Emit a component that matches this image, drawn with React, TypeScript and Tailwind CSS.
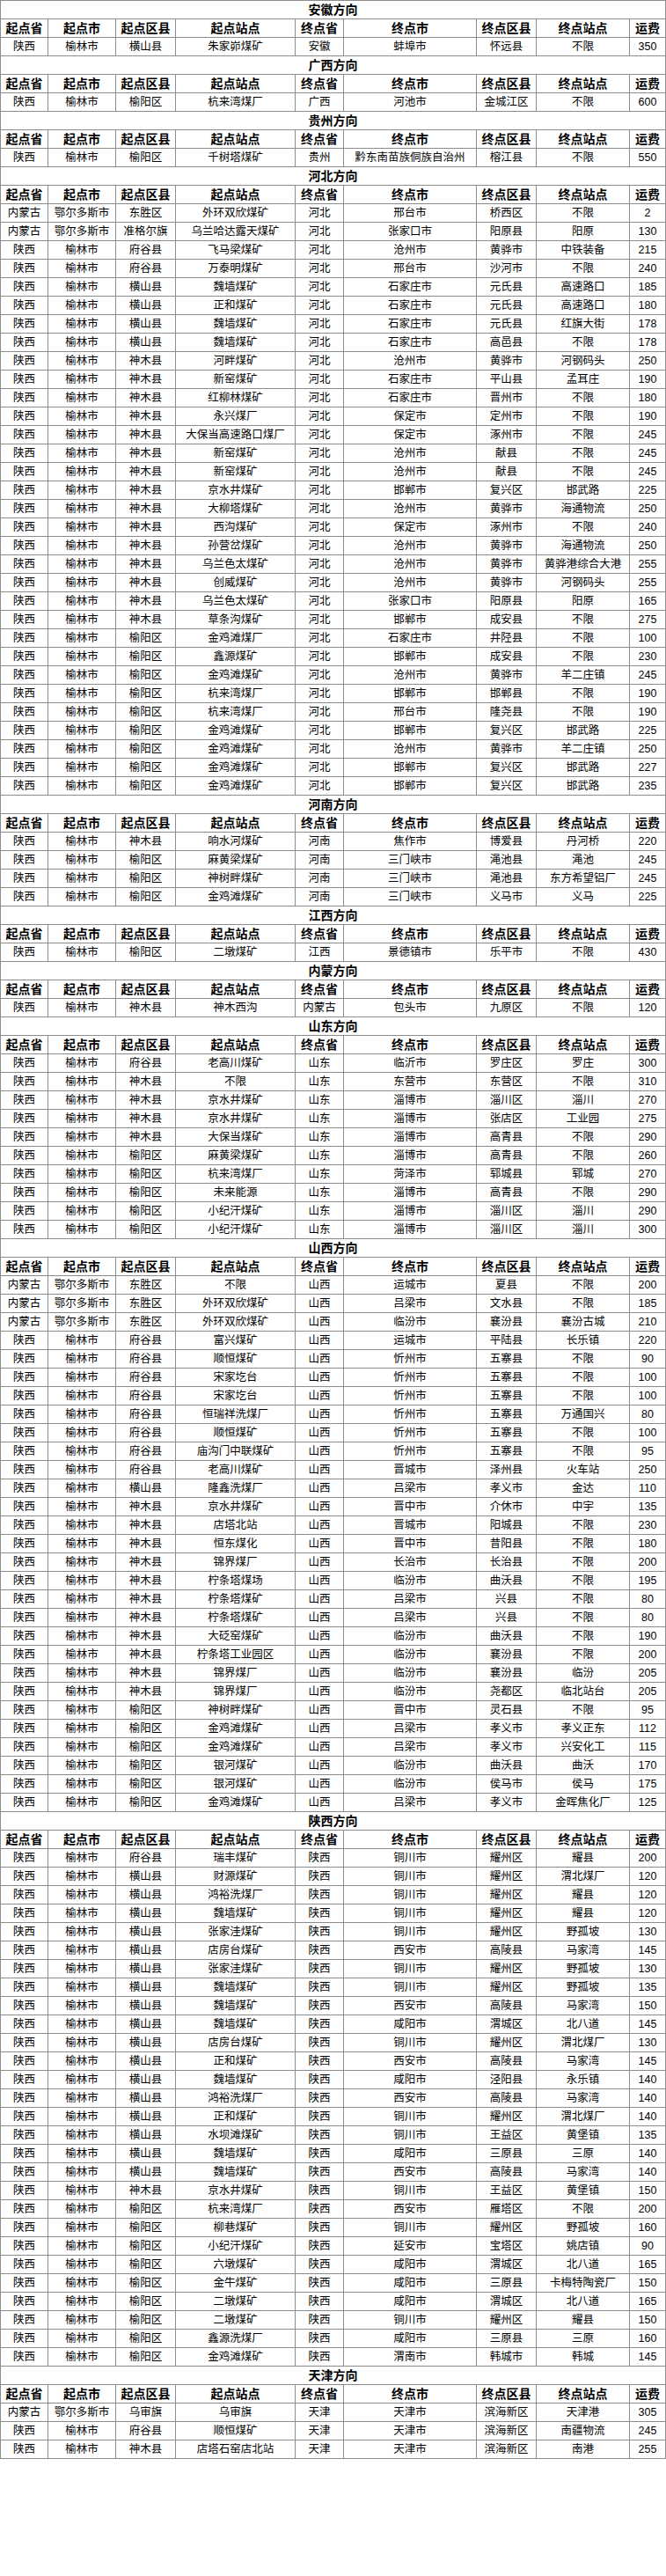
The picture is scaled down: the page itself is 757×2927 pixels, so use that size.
const HEAD = ["起点省", "起点市", "起点区县", "起点站点", "终点省", "终点市", "终点区县", "终点站点", "运费"];

type Row = string[];
type Section = { title: string; rows: Row[] };

// 简写: 起点 "陕西 榆林市 xx县" 最常见
const sx = (qx: string, zd: string, sf: string, s: string, q: string, dz: string, fee: string): Row => [
    "陕西", "榆林市", qx, zd, sf, s, q, dz, fee,
];
const nm = (qx: string, zd: string, sf: string, s: string, q: string, dz: string, fee: string): Row => [
    "内蒙古", "鄂尔多斯市", qx, zd, sf, s, q, dz, fee,
];

const sections: Section[] = [
    { title: "安徽方向", rows: [sx("横山县", "朱家峁煤矿", "安徽", "蚌埠市", "怀远县", "不限", "350")] },
    { title: "广西方向", rows: [sx("榆阳区", "杭来湾煤厂", "广西", "河池市", "金城江区", "不限", "600")] },
    { title: "贵州方向", rows: [sx("榆阳区", "千树塔煤矿", "贵州", "黔东南苗族侗族自治州", "榕江县", "不限", "550")] },
    {
        title: "河北方向",
        rows: [
            nm("东胜区", "外环双欣煤矿", "河北", "邢台市", "桥西区", "不限", "2"),
            nm("准格尔旗", "乌兰哈达露天煤矿", "河北", "张家口市", "阳原县", "阳原", "130"),
            sx("府谷县", "飞马梁煤矿", "河北", "沧州市", "黄骅市", "中铁装备", "215"),
            sx("府谷县", "万泰明煤矿", "河北", "邢台市", "沙河市", "不限", "240"),
            sx("横山县", "魏墙煤矿", "河北", "石家庄市", "元氏县", "高速路口", "185"),
            sx("横山县", "正和煤矿", "河北", "石家庄市", "元氏县", "高速路口", "180"),
            sx("横山县", "魏墙煤矿", "河北", "石家庄市", "元氏县", "红旗大街", "178"),
            sx("横山县", "魏墙煤矿", "河北", "石家庄市", "高邑县", "不限", "178"),
            sx("神木县", "河畔煤矿", "河北", "沧州市", "黄骅市", "河钢码头", "250"),
            sx("神木县", "新窑煤矿", "河北", "石家庄市", "平山县", "孟耳庄", "190"),
            sx("神木县", "红柳林煤矿", "河北", "石家庄市", "晋州市", "不限", "180"),
            sx("神木县", "永兴煤厂", "河北", "保定市", "定州市", "不限", "190"),
            sx("神木县", "大保当高速路口煤厂", "河北", "保定市", "涿州市", "不限", "245"),
            sx("神木县", "新窑煤矿", "河北", "沧州市", "献县", "不限", "245"),
            sx("神木县", "新窑煤矿", "河北", "沧州市", "献县", "不限", "245"),
            sx("神木县", "京水井煤矿", "河北", "邯郸市", "复兴区", "邯武路", "225"),
            sx("神木县", "大柳塔煤矿", "河北", "沧州市", "黄骅市", "海通物流", "250"),
            sx("神木县", "西沟煤矿", "河北", "保定市", "涿州市", "不限", "240"),
            sx("神木县", "孙营岔煤矿", "河北", "沧州市", "黄骅市", "海通物流", "250"),
            sx("神木县", "乌兰色太煤矿", "河北", "沧州市", "黄骅市", "黄骅港综合大港", "255"),
            sx("神木县", "创威煤矿", "河北", "沧州市", "黄骅市", "河钢码头", "255"),
            sx("神木县", "乌兰色太煤矿", "河北", "张家口市", "阳原县", "阳原", "165"),
            sx("神木县", "草条沟煤矿", "河北", "邯郸市", "成安县", "不限", "275"),
            sx("榆阳区", "金鸡滩煤厂", "河北", "石家庄市", "井陉县", "不限", "100"),
            sx("榆阳区", "鑫源煤矿", "河北", "邯郸市", "成安县", "不限", "230"),
            sx("榆阳区", "金鸡滩煤矿", "河北", "沧州市", "黄骅市", "羊二庄镇", "245"),
            sx("榆阳区", "杭来湾煤厂", "河北", "邯郸市", "邯郸县", "不限", "190"),
            sx("榆阳区", "杭来湾煤厂", "河北", "邢台市", "隆尧县", "不限", "190"),
            sx("榆阳区", "金鸡滩煤矿", "河北", "邯郸市", "复兴区", "邯武路", "225"),
            sx("榆阳区", "金鸡滩煤矿", "河北", "沧州市", "黄骅市", "羊二庄镇", "250"),
            sx("榆阳区", "金鸡滩煤矿", "河北", "邯郸市", "复兴区", "邯武路", "227"),
            sx("榆阳区", "金鸡滩煤矿", "河北", "邯郸市", "复兴区", "邯武路", "235"),
        ],
    },
    {
        title: "河南方向",
        rows: [
            sx("神木县", "响水河煤矿", "河南", "焦作市", "博爱县", "丹河桥", "220"),
            sx("榆阳区", "麻黄梁煤矿", "河南", "三门峡市", "渑池县", "渑池", "245"),
            sx("榆阳区", "神树畔煤矿", "河南", "三门峡市", "渑池县", "东方希望铝厂", "245"),
            sx("榆阳区", "金鸡滩煤矿", "河南", "三门峡市", "义马市", "义马", "225"),
        ],
    },
    { title: "江西方向", rows: [sx("榆阳区", "二墩煤矿", "江西", "景德镇市", "乐平市", "不限", "430")] },
    { title: "内蒙方向", rows: [sx("神木县", "神木西沟", "内蒙古", "包头市", "九原区", "不限", "120")] },
    {
        title: "山东方向",
        rows: [
            sx("府谷县", "老高川煤矿", "山东", "临沂市", "罗庄区", "罗庄", "300"),
            sx("神木县", "不限", "山东", "东营市", "东营区", "不限", "310"),
            sx("神木县", "京水井煤矿", "山东", "淄博市", "淄川区", "淄川", "270"),
            sx("神木县", "京水井煤矿", "山东", "淄博市", "张店区", "工业园", "275"),
            sx("神木县", "大保当煤矿", "山东", "淄博市", "高青县", "不限", "290"),
            sx("榆阳区", "麻黄梁煤矿", "山东", "淄博市", "高青县", "不限", "260"),
            sx("榆阳区", "杭来湾煤厂", "山东", "菏泽市", "郓城县", "郓城", "270"),
            sx("榆阳区", "未来能源", "山东", "淄博市", "高青县", "不限", "290"),
            sx("榆阳区", "小纪汗煤矿", "山东", "淄博市", "淄川区", "淄川", "290"),
            sx("榆阳区", "小纪汗煤矿", "山东", "淄博市", "淄川区", "淄川", "300"),
        ],
    },
    {
        title: "山西方向",
        rows: [
            nm("东胜区", "不限", "山西", "运城市", "夏县", "不限", "200"),
            nm("东胜区", "外环双欣煤矿", "山西", "吕梁市", "文水县", "不限", "185"),
            nm("东胜区", "外环双欣煤矿", "山西", "临汾市", "襄汾县", "襄汾古城", "210"),
            sx("府谷县", "富兴煤矿", "山西", "运城市", "平陆县", "长乐镇", "220"),
            sx("府谷县", "顺恒煤矿", "山西", "忻州市", "五寨县", "不限", "90"),
            sx("府谷县", "宋家圪台", "山西", "忻州市", "五寨县", "不限", "100"),
            sx("府谷县", "宋家圪台", "山西", "忻州市", "五寨县", "不限", "100"),
            sx("府谷县", "恒瑞祥洗煤厂", "山西", "忻州市", "五寨县", "万通国兴", "80"),
            sx("府谷县", "顺恒煤矿", "山西", "忻州市", "五寨县", "不限", "100"),
            sx("府谷县", "庙沟门中联煤矿", "山西", "忻州市", "五寨县", "不限", "95"),
            sx("府谷县", "老高川煤矿", "山西", "晋城市", "泽州县", "火车站", "250"),
            sx("横山县", "隆鑫洗煤厂", "山西", "吕梁市", "孝义市", "金达", "110"),
            sx("神木县", "京水井煤矿", "山西", "晋中市", "介休市", "中宇", "135"),
            sx("神木县", "店塔北站", "山西", "晋城市", "阳城县", "不限", "230"),
            sx("神木县", "恒东煤化", "山西", "晋中市", "昔阳县", "不限", "180"),
            sx("神木县", "锦界煤厂", "山西", "长治市", "长治县", "不限", "200"),
            sx("神木县", "柠条塔煤场", "山西", "临汾市", "曲沃县", "不限", "195"),
            sx("神木县", "柠条塔煤矿", "山西", "吕梁市", "兴县", "不限", "80"),
            sx("神木县", "柠条塔煤矿", "山西", "吕梁市", "兴县", "不限", "80"),
            sx("神木县", "大砭窑煤矿", "山西", "临汾市", "曲沃县", "不限", "190"),
            sx("神木县", "柠条塔工业园区", "山西", "临汾市", "襄汾县", "不限", "200"),
            sx("神木县", "锦界煤厂", "山西", "临汾市", "襄汾县", "临汾", "205"),
            sx("神木县", "锦界煤厂", "山西", "临汾市", "尧都区", "临北站台", "205"),
            sx("榆阳区", "神树畔煤矿", "山西", "晋中市", "灵石县", "不限", "95"),
            sx("榆阳区", "金鸡滩煤矿", "山西", "吕梁市", "孝义市", "孝义正东", "112"),
            sx("榆阳区", "金鸡滩煤矿", "山西", "吕梁市", "孝义市", "兴安化工", "115"),
            sx("榆阳区", "银河煤矿", "山西", "临汾市", "曲沃县", "曲沃", "170"),
            sx("榆阳区", "银河煤矿", "山西", "临汾市", "侯马市", "侯马", "175"),
            sx("榆阳区", "金鸡滩煤矿", "山西", "吕梁市", "孝义市", "金晖焦化厂", "125"),
        ],
    },
    {
        title: "陕西方向",
        rows: [
            sx("府谷县", "瑞丰煤矿", "陕西", "铜川市", "耀州区", "耀县", "200"),
            sx("横山县", "财源煤矿", "陕西", "铜川市", "耀州区", "渭北煤厂", "120"),
            sx("横山县", "鸿裕洗煤厂", "陕西", "铜川市", "耀州区", "耀县", "120"),
            sx("横山县", "魏墙煤矿", "陕西", "铜川市", "耀州区", "耀县", "120"),
            sx("横山县", "张家洼煤矿", "陕西", "铜川市", "耀州区", "野孤坡", "130"),
            sx("横山县", "店房台煤矿", "陕西", "西安市", "高陵县", "马家湾", "145"),
            sx("横山县", "张家洼煤矿", "陕西", "铜川市", "耀州区", "野孤坡", "130"),
            sx("横山县", "魏墙煤矿", "陕西", "铜川市", "耀州区", "野孤坡", "135"),
            sx("横山县", "魏墙煤矿", "陕西", "西安市", "高陵县", "马家湾", "150"),
            sx("横山县", "魏墙煤矿", "陕西", "咸阳市", "渭城区", "北八道", "145"),
            sx("横山县", "店房台煤矿", "陕西", "铜川市", "耀州区", "渭北煤厂", "130"),
            sx("横山县", "正和煤矿", "陕西", "西安市", "高陵县", "马家湾", "145"),
            sx("横山县", "魏墙煤矿", "陕西", "咸阳市", "泾阳县", "永乐镇", "140"),
            sx("横山县", "鸿裕洗煤厂", "陕西", "西安市", "高陵县", "马家湾", "140"),
            sx("横山县", "正和煤矿", "陕西", "铜川市", "耀州区", "渭北煤厂", "140"),
            sx("横山县", "水坝滩煤矿", "陕西", "铜川市", "王益区", "黄堡镇", "135"),
            sx("横山县", "魏墙煤矿", "陕西", "咸阳市", "三原县", "三原", "140"),
            sx("横山县", "魏墙煤矿", "陕西", "西安市", "高陵县", "马家湾", "140"),
            sx("神木县", "京水井煤矿", "陕西", "铜川市", "王益区", "黄堡镇", "150"),
            sx("榆阳区", "杭来湾煤厂", "陕西", "西安市", "雁塔区", "不限", "200"),
            sx("榆阳区", "柳巷煤矿", "陕西", "铜川市", "耀州区", "野孤坡", "160"),
            sx("榆阳区", "小纪汗煤矿", "陕西", "延安市", "宝塔区", "姚店镇", "90"),
            sx("榆阳区", "六墩煤矿", "陕西", "咸阳市", "渭城区", "北八道", "165"),
            sx("榆阳区", "金牛煤矿", "陕西", "咸阳市", "三原县", "卡梅特陶瓷厂", "150"),
            sx("榆阳区", "二墩煤矿", "陕西", "咸阳市", "渭城区", "北八道", "165"),
            sx("榆阳区", "二墩煤矿", "陕西", "铜川市", "耀州区", "耀县", "150"),
            sx("榆阳区", "鑫源洗煤厂", "陕西", "咸阳市", "三原县", "三原", "160"),
            sx("榆阳区", "金鸡滩煤矿", "陕西", "渭南市", "韩城市", "韩城", "145"),
        ],
    },
    {
        title: "天津方向",
        rows: [
            nm("乌审旗", "乌审旗", "天津", "天津市", "滨海新区", "天津港", "305"),
            sx("府谷县", "顺恒煤矿", "天津", "天津市", "滨海新区", "南疆物流", "245"),
            sx("神木县", "店塔石窑店北站", "天津", "天津市", "滨海新区", "南港", "255"),
        ],
    },
];

const gridCols = "grid grid-cols-[54px_77px_68px_136px_55px_151px_68px_106px_41px]";
const cell = "h-[21px] border-r border-b border-[#8c8c8c] flex items-center justify-center whitespace-nowrap overflow-hidden";

const App = () => {
    return (
        <div
            className="w-[757px] bg-white text-black border-t border-l border-[#8c8c8c]"
            style={{ fontFamily: '"Liberation Sans", "Noto Sans CJK SC", sans-serif' }}
        >
            {sections.map((sec) => (
                <div key={sec.title}>
                    <div className={`${cell} text-[14px] font-bold`}>{sec.title}</div>
                    <div className={gridCols}>
                        {HEAD.map((h) => (
                            <div key={h} className={`${cell} text-[14px] font-bold`}>
                                {h}
                            </div>
                        ))}
                    </div>
                    {sec.rows.map((r, i) => (
                        <div key={i} className={gridCols}>
                            {r.map((c, j) => (
                                <div key={j} className={`${cell} text-[12.5px]`}>
                                    {c}
                                </div>
                            ))}
                        </div>
                    ))}
                </div>
            ))}
        </div>
    );
};

export default App;
